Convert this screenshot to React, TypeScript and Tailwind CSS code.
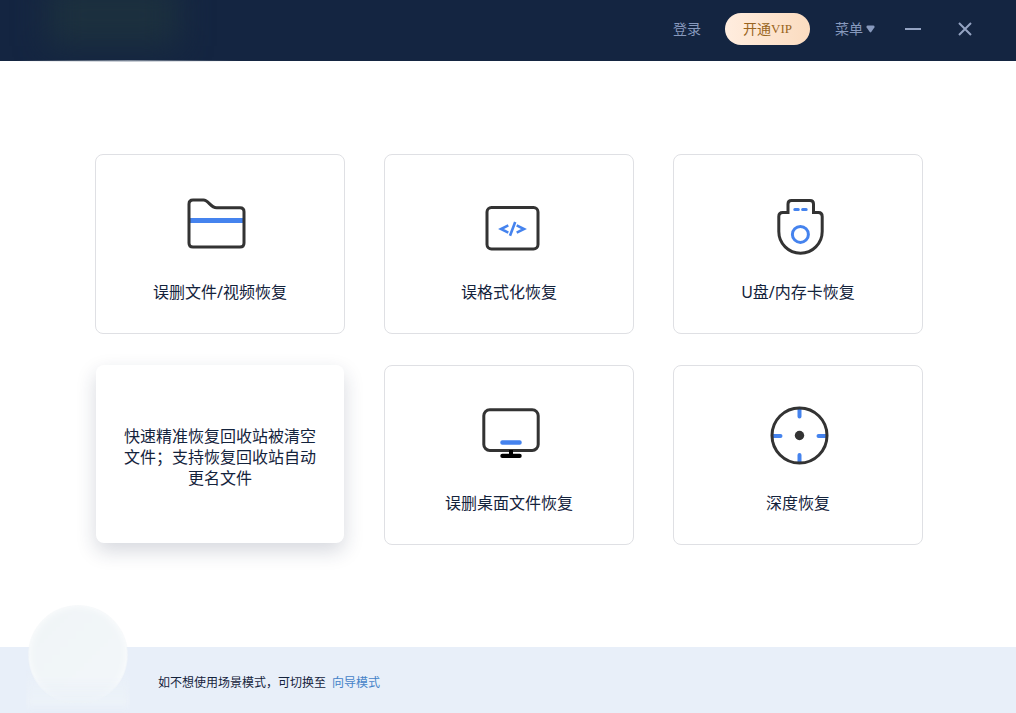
import type { ReactNode } from 'react';

interface Scene {
  id: string;
  title: string;
  icon: ReactNode;
  description?: string;
}

function FolderIcon() {
  return (
    <svg width="72" height="72" viewBox="0 0 72 72" fill="none" aria-hidden="true">
      <path d="M6 30.5H59.5" stroke="#4583ee" strokeWidth="5" />
      <path
        d="M9 10H19.5C24.5 10 26.5 17.8 32.5 17.8H56Q60 17.8 60 21.8V53Q60 57 56 57H9Q5 57 5 53V14Q5 10 9 10Z"
        stroke="#333333"
        strokeWidth="3"
      />
    </svg>
  );
}

function CodeIcon() {
  return (
    <svg width="72" height="72" viewBox="0 0 72 72" fill="none" aria-hidden="true">
      <rect x="14" y="17.5" width="51" height="41.5" rx="4.5" stroke="#333333" strokeWidth="3" />
      <path
        d="M35.3 35.4L28 39L35.3 42.6M43.7 35.4L51 39L43.7 42.6M42.2 32L37 45.8"
        stroke="#4583ee"
        strokeWidth="2.6"
      />
    </svg>
  );
}

function UsbIcon() {
  return (
    <svg width="72" height="72" viewBox="0 0 72 72" fill="none" aria-hidden="true">
      <path
        d="M26 22.5V14Q26 10.5 29.5 10.5H48Q51.5 10.5 51.5 14V22.5H56.5Q60.2 22.5 60.2 26.5V41.5A21.7 21.7 0 0 1 16.8 41.5V26.5Q16.8 22.5 20.8 22.5Z"
        stroke="#333333"
        strokeWidth="3"
      />
      <path d="M32.8 19.4H36.3M40.6 19.4H44.2" stroke="#4583ee" strokeWidth="3" strokeLinecap="round" />
      <circle cx="38.4" cy="44.4" r="8" stroke="#4583ee" strokeWidth="3" />
    </svg>
  );
}

function MonitorIcon() {
  return (
    <svg width="72" height="72" viewBox="0 0 72 72" fill="none" aria-hidden="true">
      <rect x="10.8" y="8.8" width="54.4" height="40.6" rx="6" stroke="#333333" strokeWidth="3" />
      <rect x="27.3" y="39.3" width="21.4" height="4.4" rx="2" fill="#4583ee" />
      <rect x="36" y="49" width="4" height="6" fill="#000000" />
      <rect x="27.3" y="52.7" width="21.4" height="4.4" rx="2" fill="#000000" />
    </svg>
  );
}

function TargetIcon() {
  return (
    <svg width="72" height="72" viewBox="0 0 72 72" fill="none" aria-hidden="true">
      <path
        d="M37.5 8V15.5M37.5 54V61M11 35H18.5M56.5 35H64"
        stroke="#4583ee"
        strokeWidth="4"
        strokeLinecap="round"
      />
      <circle cx="37.5" cy="34.5" r="27.5" stroke="#333333" strokeWidth="3" />
      <circle cx="37.5" cy="34.5" r="4.7" fill="#333333" />
    </svg>
  );
}

const scenes: Scene[] = [
  { id: 'files', title: '误删文件/视频恢复', icon: <FolderIcon /> },
  { id: 'format', title: '误格式化恢复', icon: <CodeIcon /> },
  { id: 'usb', title: 'U盘/内存卡恢复', icon: <UsbIcon /> },
  {
    id: 'recycle',
    title: '回收站恢复',
    icon: null,
    description: '快速精准恢复回收站被清空文件；支持恢复回收站自动更名文件',
  },
  { id: 'desktop', title: '误删桌面文件恢复', icon: <MonitorIcon /> },
  { id: 'deep', title: '深度恢复', icon: <TargetIcon /> },
];

function SceneCard({ scene }: { scene: Scene }) {
  if (scene.description) {
    return (
      <button
        type="button"
        className="mx-px mb-0.5 flex min-h-[178px] items-center justify-center rounded-lg bg-white pt-1.5 shadow-[0_8px_20px_rgba(30,40,70,0.18)]"
      >
        <span className="w-[194px] text-base leading-[21px]">{scene.description}</span>
      </button>
    );
  }

  return (
    <button
      type="button"
      className="flex min-h-[180px] flex-col items-center rounded-lg border border-[#dfe0e4] bg-white pt-[35px]"
    >
      {scene.icon}
      <span className="mt-[18px] text-base leading-6">{scene.title}</span>
    </button>
  );
}

function Header() {
  return (
    <header className="relative flex h-[61px] items-center justify-end bg-[#142541] pr-11 pb-[3px] text-sm text-[#8799bd]">
      {/* soft brand glow */}
      <div className="absolute inset-0 overflow-hidden">
        <div className="absolute -top-4 left-12 h-[62px] w-[130px] bg-[#1c303e] blur-[16px]" />
      </div>
      <div className="absolute top-[60px] left-4 h-0.5 w-[224px] bg-linear-to-r from-transparent via-[#a9b1bd] to-transparent opacity-70" />

      <a href="#login" className="relative mr-6">登录</a>
      <button
        type="button"
        className="relative mr-[25px] flex h-8 w-[85px] items-center justify-center rounded-full bg-linear-to-r from-[#ffeddf] to-[#fbdcc0] text-[#9a6420]"
      >
        开通
        <span className="font-['Liberation_Serif',serif] text-[13px]">VIP</span>
      </button>
      <button type="button" className="relative mr-[30px] flex items-center gap-[3px]">
        菜单
        <svg width="9" height="8" viewBox="0 0 9 8" fill="currentColor" aria-hidden="true">
          <path d="M1.5 0.5H7.5Q9 0.8 8.4 2.4L5.2 7.1Q4.5 7.9 3.8 7.1L0.6 2.4Q0 0.8 1.5 0.5Z" />
        </svg>
      </button>
      <button type="button" aria-label="最小化" className="relative mr-[37px]">
        <svg width="16" height="14" viewBox="0 0 16 14" stroke="#94a3c2" strokeWidth="2">
          <path d="M0 7H16" />
        </svg>
      </button>
      <button type="button" aria-label="关闭" className="relative">
        <svg width="14" height="14" viewBox="0 0 14 14" stroke="#94a3c2" strokeWidth="2">
          <path d="M1 1L13 13M13 1L1 13" />
        </svg>
      </button>
    </header>
  );
}

function Footer() {
  return (
    <footer className="relative flex h-[66px] items-center bg-[#e8eff9] pt-1.5 pl-[158px] text-xs">
      {/* assistant bubble that rises over the bar */}
      <div className="absolute bottom-0 left-[26px] h-[110px] w-[104px]">
        <div className="h-full w-full bg-[#ecf2f8] mask-[linear-gradient(to_bottom,transparent_60%,black_90%,transparent)] blur-[3px]" />
        <div className="absolute top-0.5 left-0.5 h-[100px] w-[100px] rounded-full bg-linear-to-br from-[#f0f5f7] to-[#f3f7fa] mask-[linear-gradient(to_bottom,black_70%,transparent)] blur-[1px] shadow-[inset_0_0_8px_#ffffff,0_0_4px_rgba(40,60,90,0.1)]" />
      </div>
      <p>
        如不想使用场景模式，可切换至
        <a href="#wizard" className="ml-1.5 text-[#4583c8]">向导模式</a>
      </p>
    </footer>
  );
}

export default function App() {
  return (
    <div className="flex min-h-screen flex-col bg-white font-['Noto_Sans','Noto_Sans_CJK_SC',sans-serif] text-[#14233c]" lang="zh-CN">
      <Header />
      <main className="flex-1 pt-[93px] pr-[93px] pb-[93px] pl-[95px]">
        <div className="grid grid-cols-3 gap-x-[39px] gap-y-[31px]">
          {scenes.map(scene => (
            <SceneCard key={scene.id} scene={scene} />
          ))}
        </div>
      </main>
      <Footer />
    </div>
  );
}
